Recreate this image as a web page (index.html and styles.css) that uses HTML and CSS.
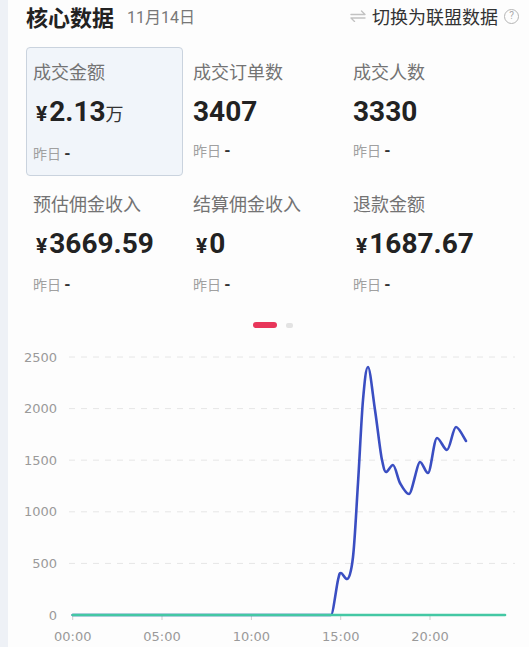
FILE: index.html
```html
<!DOCTYPE html>
<html lang="zh-CN">
<head>
    <meta charset="UTF-8">
    <meta name="viewport" content="width=device-width, initial-scale=1.0">
    <title>核心数据</title>
    <link rel="stylesheet" href="styles.css">
</head>
<body>

<div class="panel">
    <!-- Header -->
    <div class="header">
        <span class="title">核心数据</span>
        <span class="date">11月14日</span>
        <span class="switch">
            <svg class="swap-icon" width="16" height="12" viewBox="0 0 16 12">
                <path d="M1 4.5 H15 L11.5 1" fill="none" stroke="#c2c2c2" stroke-width="1.4" stroke-linecap="round" stroke-linejoin="round"/>
                <path d="M15 8 H1 L4.5 11.5" fill="none" stroke="#c2c2c2" stroke-width="1.4" stroke-linecap="round" stroke-linejoin="round"/>
            </svg>
            切换为联盟数据
            <span class="help">?</span>
        </span>
    </div>

    <!-- Metrics -->
    <div class="metrics">
        <div class="metric active">
            <div class="metric-label">成交金额</div>
            <div class="metric-value"><span class="yen">¥</span>2.13<span class="unit">万</span></div>
            <div class="metric-prev">昨日 <b>-</b></div>
        </div>
        <div class="metric">
            <div class="metric-label">成交订单数</div>
            <div class="metric-value">3407</div>
            <div class="metric-prev">昨日 <b>-</b></div>
        </div>
        <div class="metric">
            <div class="metric-label">成交人数</div>
            <div class="metric-value">3330</div>
            <div class="metric-prev">昨日 <b>-</b></div>
        </div>
        <div class="metric">
            <div class="metric-label">预估佣金收入</div>
            <div class="metric-value"><span class="yen">¥</span>3669.59</div>
            <div class="metric-prev">昨日 <b>-</b></div>
        </div>
        <div class="metric">
            <div class="metric-label">结算佣金收入</div>
            <div class="metric-value"><span class="yen">¥</span>0</div>
            <div class="metric-prev">昨日 <b>-</b></div>
        </div>
        <div class="metric">
            <div class="metric-label">退款金额</div>
            <div class="metric-value"><span class="yen">¥</span>1687.67</div>
            <div class="metric-prev">昨日 <b>-</b></div>
        </div>
    </div>

    <!-- Pager dots -->
    <div class="pager">
        <span class="dot current"></span>
        <span class="dot"></span>
    </div>

    <!-- Trend chart -->
    <svg class="chart" width="521" height="312" viewBox="8 335 521 312">
        <g class="grid">
            <line x1="69" y1="357" x2="515" y2="357"/>
            <line x1="69" y1="408.6" x2="515" y2="408.6"/>
            <line x1="69" y1="460.2" x2="515" y2="460.2"/>
            <line x1="69" y1="511.8" x2="515" y2="511.8"/>
            <line x1="69" y1="563.4" x2="515" y2="563.4"/>
        </g>
        <g class="y-labels">
            <text x="57" y="358">2500</text>
            <text x="57" y="409.6">2000</text>
            <text x="57" y="461.2">1500</text>
            <text x="57" y="512.8">1000</text>
            <text x="57" y="564.4">500</text>
            <text x="57" y="616">0</text>
        </g>
        <g class="ticks">
            <line x1="72.7" y1="615" x2="72.7" y2="620"/>
            <line x1="162" y1="615" x2="162" y2="620"/>
            <line x1="251.4" y1="615" x2="251.4" y2="620"/>
            <line x1="340.7" y1="615" x2="340.7" y2="620"/>
            <line x1="430" y1="615" x2="430" y2="620"/>
        </g>
        <g class="x-labels">
            <text x="72.7" y="637">00:00</text>
            <text x="162" y="637">05:00</text>
            <text x="251.4" y="637">10:00</text>
            <text x="340.7" y="637">15:00</text>
            <text x="430" y="637">20:00</text>
        </g>
        <path class="line-blue" d="M72.7 615 L331 615
            C333 615 336.33 587 338 580
            C339.67 573 339.5 573 341 573
            C342.5 573 345 579 347 579
            C349 579 351.17 573 353 557
            C354.83 541 356.33 509 358 483
            C359.67 457 361.33 419 363 400
            C364.67 381 366 367 368 367
            C370 367 372.67 394.5 375 410
            C377.33 425.5 380.5 454 382 460
            C383.5 466 384 472 386 472
            C388 472 390.7 465 393 465
            C395.3 465 397.7 479 400 483
            C402.3 487 406 494 409 494
            C412 494 417.3 462 420 462
            C422.7 462 425.2 473 428 473
            C430.8 473 434 438 437 438
            C440 438 444 450 447 450
            C450 450 453 427 456 427
            C459 427 464.3 438.7 466 441"/>
        <line class="line-green" x1="72.7" y1="615" x2="505" y2="615"/>
    </svg>
</div>

</body>
</html>
```

FILE: styles.css
```css
body {
    margin: 0;
    background-color: #eef1f6;
    font-family: "Noto Sans CJK SC", sans-serif;
    color: #222;
}
.panel {
    margin-left: 8px;
    height: 647px;
    background-color: #fdfdfd;
    overflow: hidden;
}
.header {
    display: flex;
    align-items: center;
    height: 32px;
    padding: 0 10px 0 18px;
}
.title {
    font-size: 22px;
    font-weight: bold;
    line-height: 32px;
    color: #222;
}
.date {
    margin-left: 13px;
    font-size: 16px;
    color: #777;
    font-family: Roboto, "Noto Sans CJK SC", sans-serif;
}
.switch {
    margin-left: auto;
    display: flex;
    align-items: center;
    font-size: 18px;
    color: #333;
}
.swap-icon {
    margin-right: 6px;
}
.help {
    display: inline-flex;
    align-items: center;
    justify-content: center;
    width: 13px;
    height: 13px;
    margin-left: 6px;
    border: 1px solid #b5b5b5;
    border-radius: 50%;
    font-size: 10px;
    line-height: 1;
    color: #aaa;
    font-family: Roboto, sans-serif;
}
.metrics {
    display: grid;
    grid-template-columns: repeat(3, 157px);
    column-gap: 3px;
    row-gap: 3px;
    margin: 15px 0 0 18px;
}
.metric {
    box-sizing: border-box;
    height: 129px;
    padding: 11px 6px 0;
    border: 1px solid transparent;
    border-radius: 4px;
}
.metric.active {
    background-color: #f1f5fa;
    border-color: #cad3de;
}
.metric-label {
    font-size: 18px;
    line-height: 24px;
    color: #737373;
}
.metric-value {
    margin-top: 12px;
    font-family: Roboto, "Noto Sans CJK SC", sans-serif;
    font-size: 28px;
    font-weight: bold;
    line-height: 34px;
    color: #222;
}
.yen {
    font-size: 21px;
    margin: 0 2px 0 3px;
}
.unit {
    font-size: 18px;
    font-weight: normal;
    color: #333;
}
.metric-prev {
    margin-top: 11px;
    font-size: 14px;
    line-height: 20px;
    color: #a0a0a0;
}
.metric-prev b {
    font-family: Roboto, sans-serif;
    font-size: 16px;
    font-weight: bold;
    color: #333;
}
.pager {
    display: flex;
    justify-content: center;
    align-items: center;
    height: 6px;
    margin-top: 14px;
    padding-left: 9px;
}
.dot {
    width: 7px;
    height: 5px;
    margin-left: 9px;
    border-radius: 2px;
    background-color: #e3e3e3;
}
.dot.current {
    width: 24px;
    height: 6px;
    margin-left: 0;
    border-radius: 3px;
    background-color: #e8365a;
}
.chart {
    display: block;
    margin-top: 7px;
}
.grid line {
    stroke: #e6e6e6;
    stroke-width: 1;
    stroke-dasharray: 6 6;
}
.ticks line {
    stroke: #cfcfcf;
    stroke-width: 1;
}
.y-labels text,
.x-labels text {
    font-family: "DejaVu Sans", sans-serif;
    font-size: 13px;
    fill: #9a9a9a;
    dominant-baseline: middle;
}
.y-labels text {
    text-anchor: end;
}
.x-labels text {
    text-anchor: middle;
}
.line-blue {
    fill: none;
    stroke: #3a4ec2;
    stroke-width: 2.6;
    stroke-linecap: round;
    stroke-linejoin: round;
}
.line-green {
    stroke: #44c8a4;
    stroke-width: 2.6;
    stroke-linecap: round;
}
```
